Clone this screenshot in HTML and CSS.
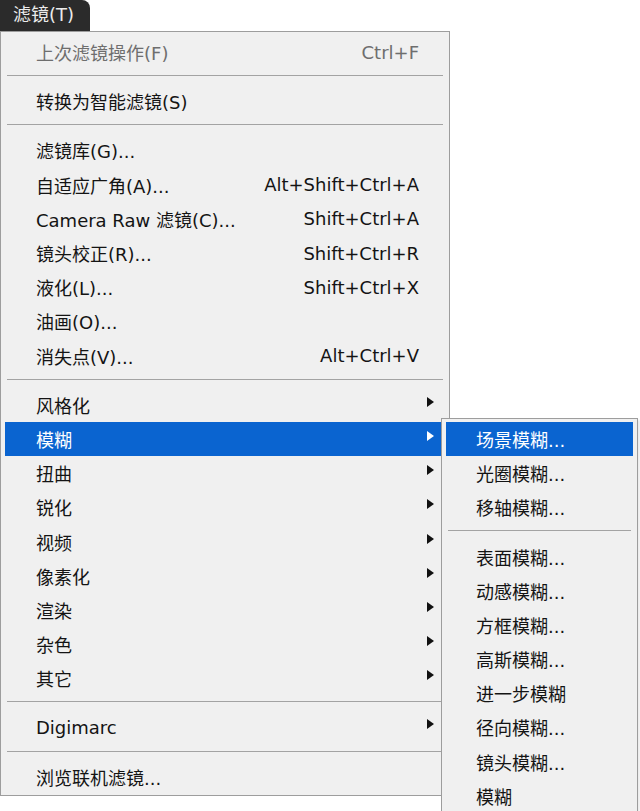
FILE: index.html
```html
<!DOCTYPE html>
<html lang="zh-CN">
<head>
<meta charset="utf-8">
<title>滤镜菜单</title>
<link rel="stylesheet" href="styles.css">
</head>
<body>
<div class="tab">滤镜(T)</div>
<div class="menu">
  <div class="item disabled"><span class="label">上次滤镜操作(F)</span><span class="key">Ctrl+F</span><span class="arr"></span></div>
  <div class="sep"></div>
  <div class="item"><span class="label">转换为智能滤镜(S)</span><span class="key"></span><span class="arr"></span></div>
  <div class="sep"></div>
  <div class="item"><span class="label">滤镜库(G)...</span><span class="key"></span><span class="arr"></span></div>
  <div class="item"><span class="label">自适应广角(A)...</span><span class="key">Alt+Shift+Ctrl+A</span><span class="arr"></span></div>
  <div class="item"><span class="label">Camera Raw 滤镜(C)...</span><span class="key">Shift+Ctrl+A</span><span class="arr"></span></div>
  <div class="item"><span class="label">镜头校正(R)...</span><span class="key">Shift+Ctrl+R</span><span class="arr"></span></div>
  <div class="item"><span class="label">液化(L)...</span><span class="key">Shift+Ctrl+X</span><span class="arr"></span></div>
  <div class="item"><span class="label">油画(O)...</span><span class="key"></span><span class="arr"></span></div>
  <div class="item"><span class="label">消失点(V)...</span><span class="key">Alt+Ctrl+V</span><span class="arr"></span></div>
  <div class="sep"></div>
  <div class="item"><span class="label">风格化</span><span class="key"></span><span class="arr"><i class="tri"></i></span></div>
  <div class="item active"><span class="label">模糊</span><span class="key"></span><span class="arr"><i class="tri"></i></span>
    <div class="submenu">
      <div class="sitem active">场景模糊...</div>
      <div class="sitem">光圈模糊...</div>
      <div class="sitem">移轴模糊...</div>
      <div class="sep"></div>
      <div class="sitem">表面模糊...</div>
      <div class="sitem">动感模糊...</div>
      <div class="sitem">方框模糊...</div>
      <div class="sitem">高斯模糊...</div>
      <div class="sitem">进一步模糊</div>
      <div class="sitem">径向模糊...</div>
      <div class="sitem">镜头模糊...</div>
      <div class="sitem">模糊</div>
    </div>
  </div>
  <div class="item"><span class="label">扭曲</span><span class="key"></span><span class="arr"><i class="tri"></i></span></div>
  <div class="item"><span class="label">锐化</span><span class="key"></span><span class="arr"><i class="tri"></i></span></div>
  <div class="item"><span class="label">视频</span><span class="key"></span><span class="arr"><i class="tri"></i></span></div>
  <div class="item"><span class="label">像素化</span><span class="key"></span><span class="arr"><i class="tri"></i></span></div>
  <div class="item"><span class="label">渲染</span><span class="key"></span><span class="arr"><i class="tri"></i></span></div>
  <div class="item"><span class="label">杂色</span><span class="key"></span><span class="arr"><i class="tri"></i></span></div>
  <div class="item"><span class="label">其它</span><span class="key"></span><span class="arr"><i class="tri"></i></span></div>
  <div class="sep"></div>
  <div class="item"><span class="label">Digimarc</span><span class="key"></span><span class="arr"><i class="tri"></i></span></div>
  <div class="sep"></div>
  <div class="item"><span class="label">浏览联机滤镜...</span><span class="key"></span><span class="arr"></span></div>
</div>
</body>
</html>
```

FILE: styles.css
```css
html {
  margin: 0;
  padding: 0;
  background: #ffffff;
}
body {
  margin: 0;
  padding: 0;
  height: 811px;
  overflow: hidden;
  background: #ffffff;
  font-family: "DejaVu Sans", "Noto Sans CJK SC", sans-serif;
  font-size: 18px;
  color: #141414;
}
.tab {
  width: 90px;
  height: 31px;
  box-sizing: border-box;
  background: #2b2b2b;
  color: #ececec;
  border-top-right-radius: 8px;
  padding-left: 13px;
  line-height: 30px;
}
.menu {
  width: 450px;
  box-sizing: border-box;
  background: #f0f0f0;
  border: 1px solid #9d9d9d;
  padding: 3px 4px 1px 4px;
}
.item {
  position: relative;
  height: 34.2px;
  display: grid;
  grid-template-columns: 1fr auto 26px;
  align-items: center;
  padding-left: 31px;
  white-space: nowrap;
}
.item.disabled {
  color: #6e6e6e;
}
.item.active {
  background: #0a64d0;
  color: #ffffff;
}
.arr {
  height: 100%;
  display: flex;
  align-items: center;
  padding-left: 8px;
}
.tri {
  display: block;
  width: 0;
  height: 0;
  border-left: 7px solid #111;
  border-top: 5.5px solid transparent;
  border-bottom: 5.5px solid transparent;
  margin-top: -6px;
}
.item.active .tri {
  border-left-color: #ffffff;
}
.sep {
  height: 15px;
  box-sizing: border-box;
  padding-top: 6px;
  margin: 0 2px;
}
.sep::before {
  content: "";
  display: block;
  border-top: 1px solid #a3a3a3;
}
.submenu {
  position: absolute;
  left: 436px;
  top: -4px;
  width: 197px;
  box-sizing: border-box;
  background: #f0f0f0;
  border: 1px solid #9d9d9d;
  padding: 3px 4px 1px 4px;
  color: #141414;
  box-shadow: 2px 2px 2px rgba(0, 0, 0, 0.08);
}
.sitem {
  height: 34.2px;
  display: flex;
  align-items: center;
  padding-left: 30px;
  white-space: nowrap;
}
.sitem.active {
  background: #0a64d0;
  color: #ffffff;
}
```
